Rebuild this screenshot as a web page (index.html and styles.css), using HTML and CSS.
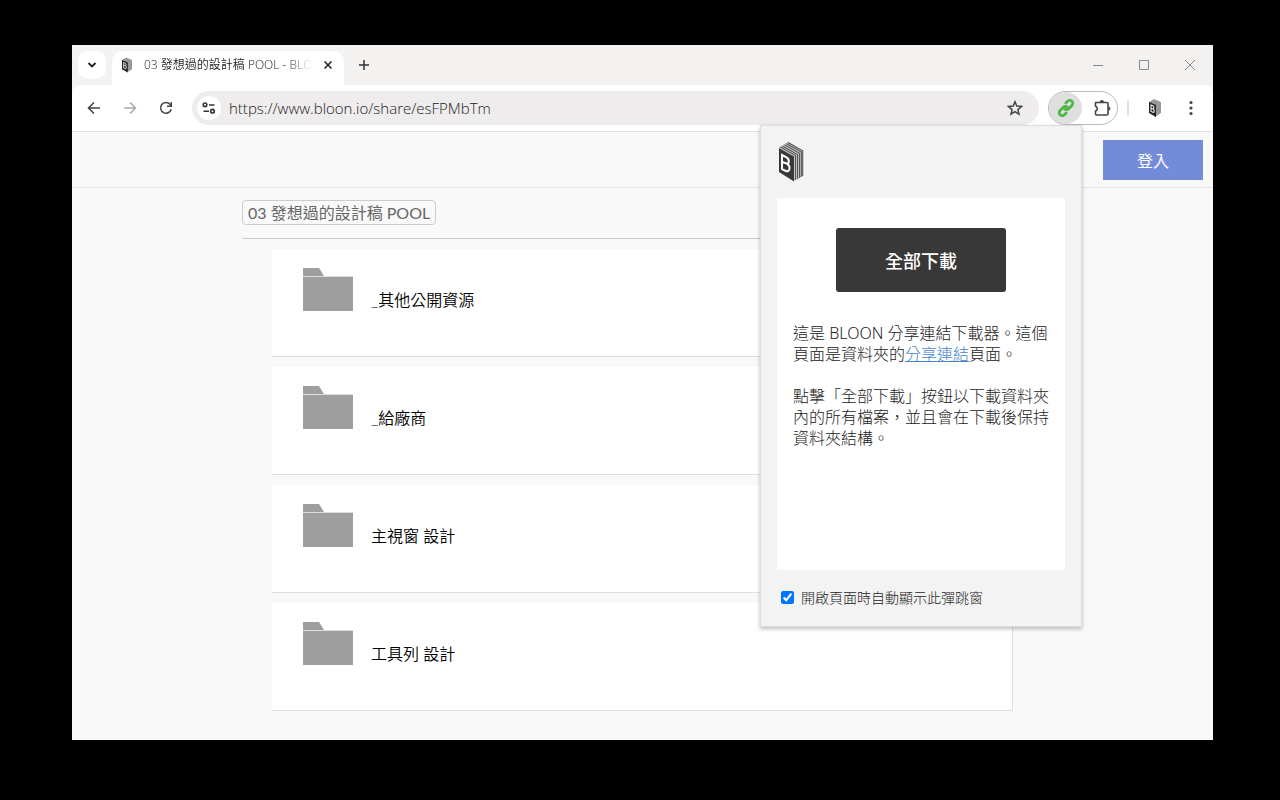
FILE: index.html
```html
<!DOCTYPE html>
<html lang="zh-Hant">
<head>
<meta charset="utf-8">
<title>03 發想過的設計稿 POOL - BLOON</title>
<link rel="stylesheet" href="styles.css">
</head>
<body>
<svg class="defs" aria-hidden="true">
  <symbol id="book-small" viewBox="0 0 12 18">
    <path fill="#999" d="M0 3 5 0l7 3v11l-6 4z"/>
    <path fill="#222" d="M0 3l7 3v12l-7-4z"/>
    <path fill="none" stroke="#eee" stroke-width="1.100" d="M2 6l2 .8q1.200.8.900 2.200L4.300 10q1.200 1 .9 2.600-.3 1-1.200.7L2 12.500zM2 9.200l2.300.8"/>
  </symbol>
  <symbol id="folder" viewBox="0 0 50 43">
    <path fill="#9e9e9e" d="M0 0h16l5 8H0zM0 9h50v34H0z"/>
    <path fill="#ddd" d="M0 8h50v1H0z"/>
  </symbol>
</svg>
<div class="browser">
  <div class="tabstrip">
    <button class="tab-search" aria-label="搜尋分頁"><svg width="12" height="12" viewBox="0 0 12 12"><path d="M2.500 4 6 7.500 9.500 4" fill="none" stroke="#222" stroke-width="1.800"/></svg></button>
    <div class="tab">
      <svg class="favicon" width="10" height="16"><use href="#book-small"/></svg>
      <span class="tab-title">03 發想過的設計稿 POOL - BLOON</span>
      <button class="icon-btn" aria-label="關閉分頁"><svg width="10" height="10" viewBox="0 0 10 10"><path d="M1.500 1.500l7 7m0-7l-7 7" stroke="#222" stroke-width="1.600"/></svg></button>
    </div>
    <button class="icon-btn new-tab" aria-label="新分頁"><svg width="12" height="12" viewBox="0 0 12 12"><path d="M6 1v10M1 6h10" stroke="#333" stroke-width="1.500"/></svg></button>
    <div class="window-controls">
      <button class="icon-btn" aria-label="最小化"><svg width="12" height="12" viewBox="0 0 12 12"><path d="M1 6.500h10" stroke="#888"/></svg></button>
      <button class="icon-btn" aria-label="最大化"><svg width="12" height="12" viewBox="0 0 12 12"><path d="M1.500 1.500h9v9h-9z" fill="none" stroke="#888"/></svg></button>
      <button class="icon-btn" aria-label="關閉"><svg width="12" height="12" viewBox="0 0 12 12"><path d="M1 1l10 10M11 1L1 11" stroke="#888"/></svg></button>
    </div>
  </div>
  <div class="toolbar-back">
  <div class="toolbar">
    <button class="icon-btn nav" aria-label="上一頁"><svg width="14" height="14" viewBox="0 0 14 14"><path d="M13 7H2M7 1.500 1.500 7 7 12.500" fill="none" stroke="#444" stroke-width="1.600"/></svg></button>
    <button class="icon-btn nav" aria-label="下一頁"><svg width="14" height="14" viewBox="0 0 14 14"><path d="M1 7h11M7 1.500 12.500 7 7 12.500" fill="none" stroke="#aaa" stroke-width="1.500"/></svg></button>
    <button class="icon-btn nav" aria-label="重新載入"><svg width="14" height="14" viewBox="0 0 14 14"><path d="M12.200 8.300A5.400 5.400 0 1 1 11 3.200L12.500 4.700" fill="none" stroke="#444" stroke-width="1.500"/><path d="M13 1v5H8V4.600h3.500V1z" fill="#444"/></svg></button>
    <div class="omnibox">
      <button class="site-info" aria-label="網站資訊"><svg width="14" height="12" viewBox="0 0 14 12"><g fill="none" stroke="#333" stroke-width="1.600"><circle cx="3" cy="2.800" r="1.800"/><path d="M7 3h5.500M1.500 9.200H7"/><circle cx="10.500" cy="9.200" r="1.800"/></g></svg></button>
      <input class="url" aria-label="網址" value="https://www.bloon.io/share/esFPMbTm">
      <button class="icon-btn" aria-label="加入書籤"><svg width="16" height="16" viewBox="0 0 16 16"><path d="M8 1.800l1.800 4.300 4.700.4-3.600 3.100 1.100 4.600-4-2.500-4 2.500 1.100-4.600-3.600-3.100 4.700-.4z" fill="none" stroke="#444" stroke-width="1.500"/></svg></button>
    </div>
    <div class="extensions">
      <button class="ext-active" aria-label="BLOON 分享連結下載器"><svg width="18" height="18" viewBox="0 0 18 18"><g fill="none" stroke="#4eb848" stroke-width="2.800" stroke-linecap="round"><path d="M7.300 9.500a3 3 0 0 0 4.400.3l3.200-3.300a3 3 0 0 0-4.300-4.300L8.900 4"/><path d="M10.700 8.500a3 3 0 0 0-4.400-.3l-3.200 3.300a3 3 0 0 0 4.300 4.300L9.100 14"/></g></svg></button>
      <button class="icon-btn puzzle" aria-label="擴充功能"><svg width="18" height="18" viewBox="0 0 18 18"><path d="M2.500 3.500H14a1 1 0 0 1 1 1V15a1 1 0 0 1-1 1H3.500a1 1 0 0 1-1-1v-3a2.500 2.500 0 0 0 0-4.800z" fill="none" stroke="#444" stroke-width="1.600" stroke-linejoin="round"/><path d="M6.700 3.200a2.100 2.100 0 0 1 4.200 0zM15.300 7.500a2.100 2.100 0 0 1 0 4.200z" fill="#444"/></svg></button>
    </div>
    <span class="divider"></span>
    <button class="icon-btn profile" aria-label="BLOON"><svg width="12" height="18"><use href="#book-small"/></svg></button>
    <button class="icon-btn menu" aria-label="選單"><svg width="4" height="16" viewBox="0 0 4 16"><g fill="#444"><circle cx="2" cy="2.500" r="1.600"/><circle cx="2" cy="8" r="1.600"/><circle cx="2" cy="13.500" r="1.600"/></g></svg></button>
  </div>
  </div>
  <header class="site-header"><button class="login">登入</button></header>
  <main class="content">
    <nav class="crumbs"><a class="crumb" href="#">03 發想過的設計稿 POOL</a></nav>
    <ul class="folders">
      <li class="card"><svg class="folder" width="50" height="43"><use href="#folder"/></svg><a class="name" href="#">_其他公開資源</a></li>
      <li class="card"><svg class="folder" width="50" height="43"><use href="#folder"/></svg><a class="name" href="#">_給廠商</a></li>
      <li class="card"><svg class="folder" width="50" height="43"><use href="#folder"/></svg><a class="name" href="#">主視窗 設計</a></li>
      <li class="card"><svg class="folder" width="50" height="43"><use href="#folder"/></svg><a class="name" href="#">工具列 設計</a></li>
    </ul>
  </main>
  <aside class="popup">
    <svg class="logo" width="26" height="40" viewBox="0 0 26 40">
      <path fill="#ccc" d="M1 5 10 0l15 9v25l-9 5z"/>
      <path fill="none" stroke="#555" stroke-width="1.100" d="M2.500 5l15 8.500V38M4.500 4l15 8.500V37M6.500 2.700l15 8.500V36M8.300 1.500l15 8.500V35M10 .4l14.700 8.400V34"/>
      <path fill="#383838" d="M1 6l15 8.500V39.500L1 30z"/>
      <g fill="none" stroke="#fff" stroke-width="2"><path d="M4 13l4.500 2.300c2 1.200 2.500 2.700 2.300 4.500-.2 1.600-1.300 2-2.800 1.600L4 19.800zM4 19.800l4.800 1.800c2.200 1.200 3 3 2.700 5-.3 2.200-1.600 3.200-3.700 2.400L4 27.200z"/></g>
    </svg>
    <section class="panel">
      <button class="download">全部下載</button>
      <p>這是 BLOON 分享連結下載器。這個頁面是資料夾的<a href="#">分享連結</a>頁面。</p>
      <p>點擊「全部下載」按鈕以下載資料夾內的所有檔案，並且會在下載後保持資料夾結構。</p>
    </section>
    <label class="auto"><input type="checkbox" checked>開啟頁面時自動顯示此彈跳窗</label>
  </aside>
</div>
</body>
</html>
```
FILE: styles.css
```css
* { box-sizing: border-box; }
body {
  margin: 0;
  min-height: 100vh;
  padding: 45px 67px 60px 72px;
  display: flex;
  background: #000;
  font-family: "Open Sans", "Noto Sans CJK TC", sans-serif;
  color: #333;
}
.defs { position: absolute; width: 0; height: 0; }
svg { display: block; flex: none; }
button { border: 0; padding: 0; background: none; font: inherit; color: inherit; }
.browser {
  position: relative;
  flex: 1;
  min-width: 0;
  display: flex;
  flex-direction: column;
  background: #f9f9f9;
}
.icon-btn { display: flex; align-items: center; justify-content: center; width: 20px; height: 20px; flex: none; }

.tabstrip {
  display: flex;
  align-items: center;
  height: 40px;
  padding-left: 6px;
  background: #f3f2f1;
}
.tab-search {
  display: flex;
  align-items: center;
  justify-content: center;
  width: 28px;
  height: 28px;
  border-radius: 10px;
  background: #fff;
}
.tab {
  display: flex;
  align-items: center;
  align-self: flex-end;
  width: 232px;
  height: 34px;
  margin-left: 6px;
  padding: 0 6px 6px 10px;
  border-radius: 10px 10px 0 0;
  background: #fff;
}
.tab-title {
  flex: 1;
  margin: 0 6px 0 12px;
  overflow: hidden;
  white-space: nowrap;
  font-size: 12px;
  font-weight: 350;
  line-height: 18px;
  color: #222;
  mask-image: linear-gradient(90deg, #000 86%, transparent);
}
.new-tab { margin-left: 10px; }
.window-controls { display: flex; gap: 26px; margin-left: auto; padding-right: 13px; }

.toolbar-back { background: #f3f2f1; }
.toolbar {
  display: flex;
  align-items: center;
  height: 47px;
  padding-left: 4px;
  border-bottom: 1px solid #e0e0e0;
  border-radius: 8px 8px 0 0;
  background: #fff;
}
.nav { width: 36px; }
.omnibox {
  display: flex;
  align-items: center;
  flex: 1;
  min-width: 0;
  height: 34px;
  margin-left: 8px;
  padding: 0 14px 0 5px;
  border-radius: 17px;
  background: #eeeced;
}
.site-info {
  display: flex;
  align-items: center;
  justify-content: center;
  width: 24px;
  height: 24px;
  border-radius: 50%;
  background: #fff;
}
.url {
  flex: 1;
  min-width: 0;
  border: 0;
  padding: 0 0 0 8px;
  background: none;
  font: 300 15px/20px "Open Sans", sans-serif;
  color: #222;
}
.extensions {
  display: flex;
  align-items: center;
  width: 70px;
  height: 34px;
  margin-left: 9px;
  border: 1px solid #bbb;
  border-radius: 17px;
}
.ext-active {
  display: flex;
  align-items: center;
  justify-content: center;
  width: 33px;
  height: 32px;
  border-radius: 16px;
  background: #dfdfdf;
}
.puzzle { margin-left: 10px; }
.divider { width: 2px; height: 16px; margin-left: 9px; background: #e0e0e0; }
.profile { margin-left: 16px; }
.menu { margin: 0 12px 0 16px; }

.site-header {
  display: flex;
  justify-content: flex-end;
  align-items: center;
  height: 56px;
  padding-right: 10px;
  border-bottom: 1px solid #e2e2e2;
}
.login { width: 100px; height: 40px; background: #748bda; color: #fff; font-size: 16px; }

.content {
  width: 100%;
  max-width: 801px;
  margin: 0 auto;
  padding-top: 12px;
  font-family: Lato, "Noto Sans CJK TC", sans-serif;
  font-size: 16px;
}
.crumbs { display: flex; padding-bottom: 13px; border-bottom: 1px solid #ccc; }
.crumb {
  padding: 0 5px;
  border: 1px solid #ccc;
  border-radius: 4px;
  line-height: 23px;
  color: #666;
  text-decoration: none;
}
.folders {
  display: flex;
  flex-direction: column;
  gap: 10px;
  margin: 10px 30px 0;
  padding: 0;
  list-style: none;
}
.card {
  display: flex;
  align-items: flex-start;
  height: 108px;
  padding: 19px 31px;
  border: solid #e0e0e0;
  border-width: 0 1px 1px 0;
  background: #fff;
}
.name { margin: 20px 0 0 18px; line-height: 24px; font-weight: 350; color: #000; text-decoration: none; }

.popup {
  position: absolute;
  top: 80px;
  right: 131px;
  width: 322px;
  padding: 16px;
  border: 1px solid #dcdede;
  background: #f3f3f3;
  box-shadow: 0 2px 4px rgba(0, 0, 0, .25);
}
.logo { margin-left: 1px; }
.panel {
  min-height: 372px;
  margin-top: 16px;
  padding: 30px 16px;
  background: #fff;
  font-size: 16px;
  line-height: 21px;
}
.download {
  display: block;
  width: 170px;
  height: 64px;
  margin: 0 auto 31px;
  padding-top: 2px;
  border-radius: 3px;
  background: #383838;
  color: #fff;
  font-size: 18px;
  font-weight: 500;
}
.panel p { margin: 0 0 21px; font-family: "Noto Sans", "Noto Sans CJK TC", sans-serif; font-weight: 300; color: #222; }
.panel a { color: #4484ce; }
.auto { display: flex; align-items: center; margin-top: 17px; padding-bottom: 2px; font-size: 14px; line-height: 21px; font-weight: 300; color: #222; }
.auto input { width: 13px; height: 13px; margin: 0 7px 0 4px; }
```
